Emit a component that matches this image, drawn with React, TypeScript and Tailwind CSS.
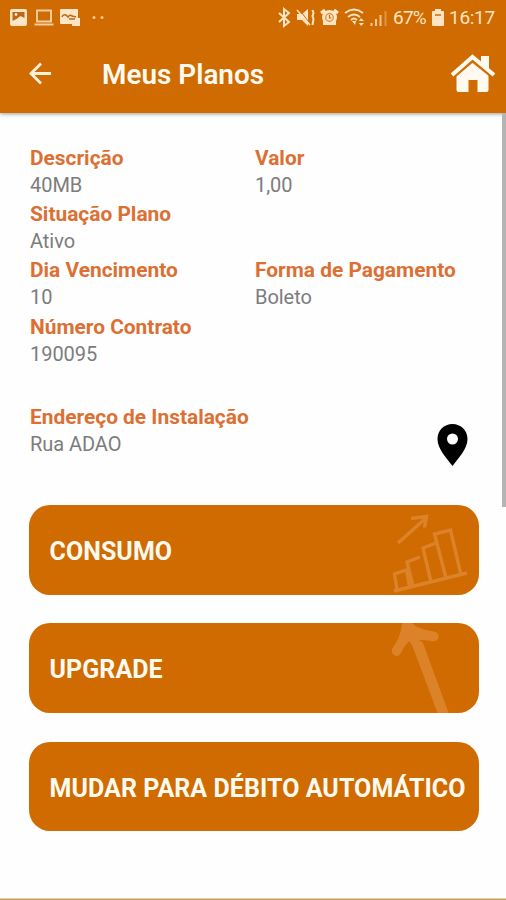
import type { ReactNode } from "react";

function Field({ label, value, className = "" }: { label: string; value: string; className?: string }) {
  return (
    <div className={className}>
      <div className="h-[28px] text-[20.9px] leading-[28px] font-bold whitespace-nowrap text-[#dc7034]">{label}</div>
      <div className="h-[28.2px] text-[20px] leading-[27px] tracking-[-0.05px] text-[#7c7c7c]">{value}</div>
    </div>
  );
}

function PlanButton({ children, art }: { children: ReactNode; art?: ReactNode }) {
  return (
    <button className="relative flex h-[89.5px] w-[450px] shrink-0 items-center overflow-hidden rounded-[21px] bg-[#cf6b00] pt-[4px] pl-[21px] text-left text-[25px] font-bold tracking-[0.06px] whitespace-nowrap text-[#fffaf0]">
      {art}
      <span className="relative">{children}</span>
    </button>
  );
}

function StatusLeft() {
  return (
    <svg width="110" height="34" viewBox="0 0 110 34" fill="none" stroke="#ffe5c4" strokeWidth="1.8">
      <rect x="10" y="9" width="17" height="17" rx="2" fill="#ffe5c4" stroke="none" />
      <path d="M12.500 12h12v6l-4-2-4 3-4 2z" fill="#ba6819" stroke="none" />
      <circle cx="16" cy="14.500" r="1.400" fill="#ffe5c4" stroke="none" />
      <path d="M37 10.500h14v11H37zM34.500 24.500h19" opacity=".8" strokeWidth="2" />
      <path d="M61 9h17v9h2v8h-8v-2h-11q-1 0-1-1v-13q0-1 1-1z" fill="#ffe5c4" stroke="none" />
      <path d="M62 17q1-3 4-2l2 2q2-3 4-1l4 1M69 19h6" stroke="#ba6819" strokeWidth="1.5" />
      <circle cx="94" cy="17.500" r="1.500" fill="#ffc788" stroke="none" />
      <circle cx="102" cy="17.500" r="1.500" fill="#ffc788" stroke="none" />
    </svg>
  );
}

function StatusIcons() {
  return (
    <svg width="112" height="34" viewBox="276 0 112 34" fill="none" stroke="#ffe5c4" strokeWidth="1.7">
      <path d="M279 13l10 9-5 4V9l5 4-10 9" strokeWidth="2" />
      <path d="M297 14h5l6-5v17l-6-6h-5z" fill="#ffe5c4" stroke="none" />
      <path d="M299 9l12 16" stroke="#cf6b00" strokeWidth="1" />
      <path d="M297 10l13 15" strokeWidth="1.5" />
      <path d="M312.500 10l1 3-1 3 1 3-1 6" strokeWidth="2" />
      <path d="M321 13l4-3M338 13l-4-3" strokeWidth="3" />
      <path d="M323 11h13v14h-13z" fill="#ffe5c4" stroke="none" />
      <circle cx="329.500" cy="17.500" r="7.500" fill="#ffe5c4" stroke="none" />
      <circle cx="329.500" cy="17.500" r="3.800" stroke="#d98532" strokeWidth="1.200" />
      <path d="M329.500 15v3h2" stroke="#cf6b00" strokeWidth="1.200" />
      <path d="M345 13q9-7 18 0M348 17q6-5 12 0M351 20q3-3 6 0" strokeWidth="1.800" />
      <path d="M352 21h4l-1 4zM361 18l3 3h-5zM359 23h5l-3 3z" fill="#ffe5c4" stroke="none" />
      <path d="M371.500 23v3M376 19v7M380.500 15v11" strokeWidth="2" opacity=".75" />
      <path d="M385.500 11v15" strokeWidth="2" opacity=".35" />
    </svg>
  );
}

function ChartArt() {
  return (
    <svg className="absolute top-0 right-0" width="109" height="90" viewBox="370 505 109 90" fill="none" stroke="#dc832a" strokeWidth="3.400">
      <path d="M398 543l28-25M411 518.500l15.500-2-2 11" />
      <path d="M397 590l-2.500-16 12-4l3 17M413 586l-6-24 13-5M431 582l-8-34 13-5M446 578l-11.500-44 16-4L461 575M394 591l73-18" />
    </svg>
  );
}

function ArrowArt() {
  return (
    <svg className="absolute top-0 right-0" width="109" height="90" viewBox="370 623.500 109 90" fill="#dc832a">
      <path d="M402 623.500h10l5 4q9 4 19 5 4 2 2 7-2 3-7 2-7-1-12-1l4 3 26 71h-11l-26-69-3-4q-5 5-8 12-3 5-7 2-3-2-2-6 9-12 10-26z" />
    </svg>
  );
}

export default function App() {
  return (
    <div className="flex h-[900px] w-[506px] flex-col overflow-hidden bg-[#fefefe] font-['Roboto',sans-serif]">
      <header className="relative h-[113px] shrink-0 bg-[#cf6b00] shadow-[0_1px_4px_rgba(0,0,0,0.4)]">
        <div className="flex h-[34px] items-center text-[19px] text-[#ffe5c4]">
          <StatusLeft />
          <div className="ml-[166px] flex items-center">
            <StatusIcons />
            <span className="ml-[5px] w-[35px] pt-[3px] whitespace-nowrap tracking-[-0.8px]">67%</span>
            <svg className="ml-[4px]" width="12" height="34" viewBox="0 0 12 34">
              <path d="M3 9h6v2h2q1 0 1 1v13q0 1-1 1H1q-1 0-1-1V12q0-1 1-1h2z" fill="#ffe5c4" />
              <path d="M3 15h6" stroke="#cf6b00" strokeWidth="1.500" />
            </svg>
            <span className="ml-[5px] pt-[3px] whitespace-nowrap tracking-[-0.3px]">16:17</span>
          </div>
        </div>
        <div className="flex h-[79px] items-center text-[#fffaf0]">
          <svg className="ml-[28px] shrink-0" width="24" height="79" viewBox="28 34 24 79" fill="none" stroke="#fff1dc" strokeWidth="2.800">
            <path d="M51 73.500H31M41 63.500l-10 10 10 10" />
          </svg>
          <h1 className="ml-[50px] w-[348px] pt-[3px] text-[27.9px] font-semibold whitespace-nowrap">Meus Planos</h1>
          <svg className="shrink-0" width="46" height="79" viewBox="450 34 46 79" fill="#fffaf0">
            <path d="M456.500 75l16-13.500 16 13.500v15q0 2-2 2h-9V80h-9v12h-10q-2 0-2-2z" />
            <path d="M452 75l20.500-18L494 75" fill="none" stroke="#fffaf0" strokeWidth="4" />
            <path d="M481 56h8v15l-8-7z" />
            <path d="M456 76l16.500-14L490 76" fill="none" stroke="#cf6b00" strokeWidth="1.400" />
          </svg>
        </div>
      </header>
      <main className="relative flex h-[785px] shrink-0 flex-col px-[28.500px] pt-[31px]">
        <div className="absolute top-0 right-0 h-[393.500px] w-[4px] bg-[#b4b4b4]" />
        <div className="grid h-[258.500px] grid-cols-[225px_1fr] content-start pl-[1.500px]">
          <Field label="Descrição" value="40MB" />
          <Field label="Valor" value="1,00" />
          <Field label="Situação Plano" value="Ativo" className="col-span-2" />
          <Field label="Dia Vencimento" value="10" />
          <Field label="Forma de Pagamento" value="Boleto" />
          <Field label="Número Contrato" value="190095" className="col-span-2" />
        </div>
        <div className="flex h-[102.500px] shrink-0 justify-between pl-[1.500px]">
          <Field label="Endereço de Instalação" value="Rua ADAO" />
          <svg className="mt-[21px] mr-[10px]" width="31" height="42" viewBox="0 0 31 42" fill="#000">
            <path fillRule="evenodd" d="M15.500 0C7 0 .5 6.500.5 15c0 10 9 19 15 27 6-8 15-17 15-27C30.500 6.500 24 0 15.500 0zm0 9.500a5.500 5.500 0 1 0 0 11 5.500 5.500 0 0 0 0-11z" />
          </svg>
        </div>
        <div className="flex flex-col gap-[28.800px]">
          <PlanButton art={<ChartArt />}>CONSUMO</PlanButton>
          <PlanButton art={<ArrowArt />}>UPGRADE</PlanButton>
          <PlanButton>MUDAR PARA DÉBITO AUTOMÁTICO</PlanButton>
        </div>
      </main>
      <footer className="h-[2px] shrink-0 border-t border-[#ecd0a2] bg-[#bf9a62]" />
    </div>
  );
}
